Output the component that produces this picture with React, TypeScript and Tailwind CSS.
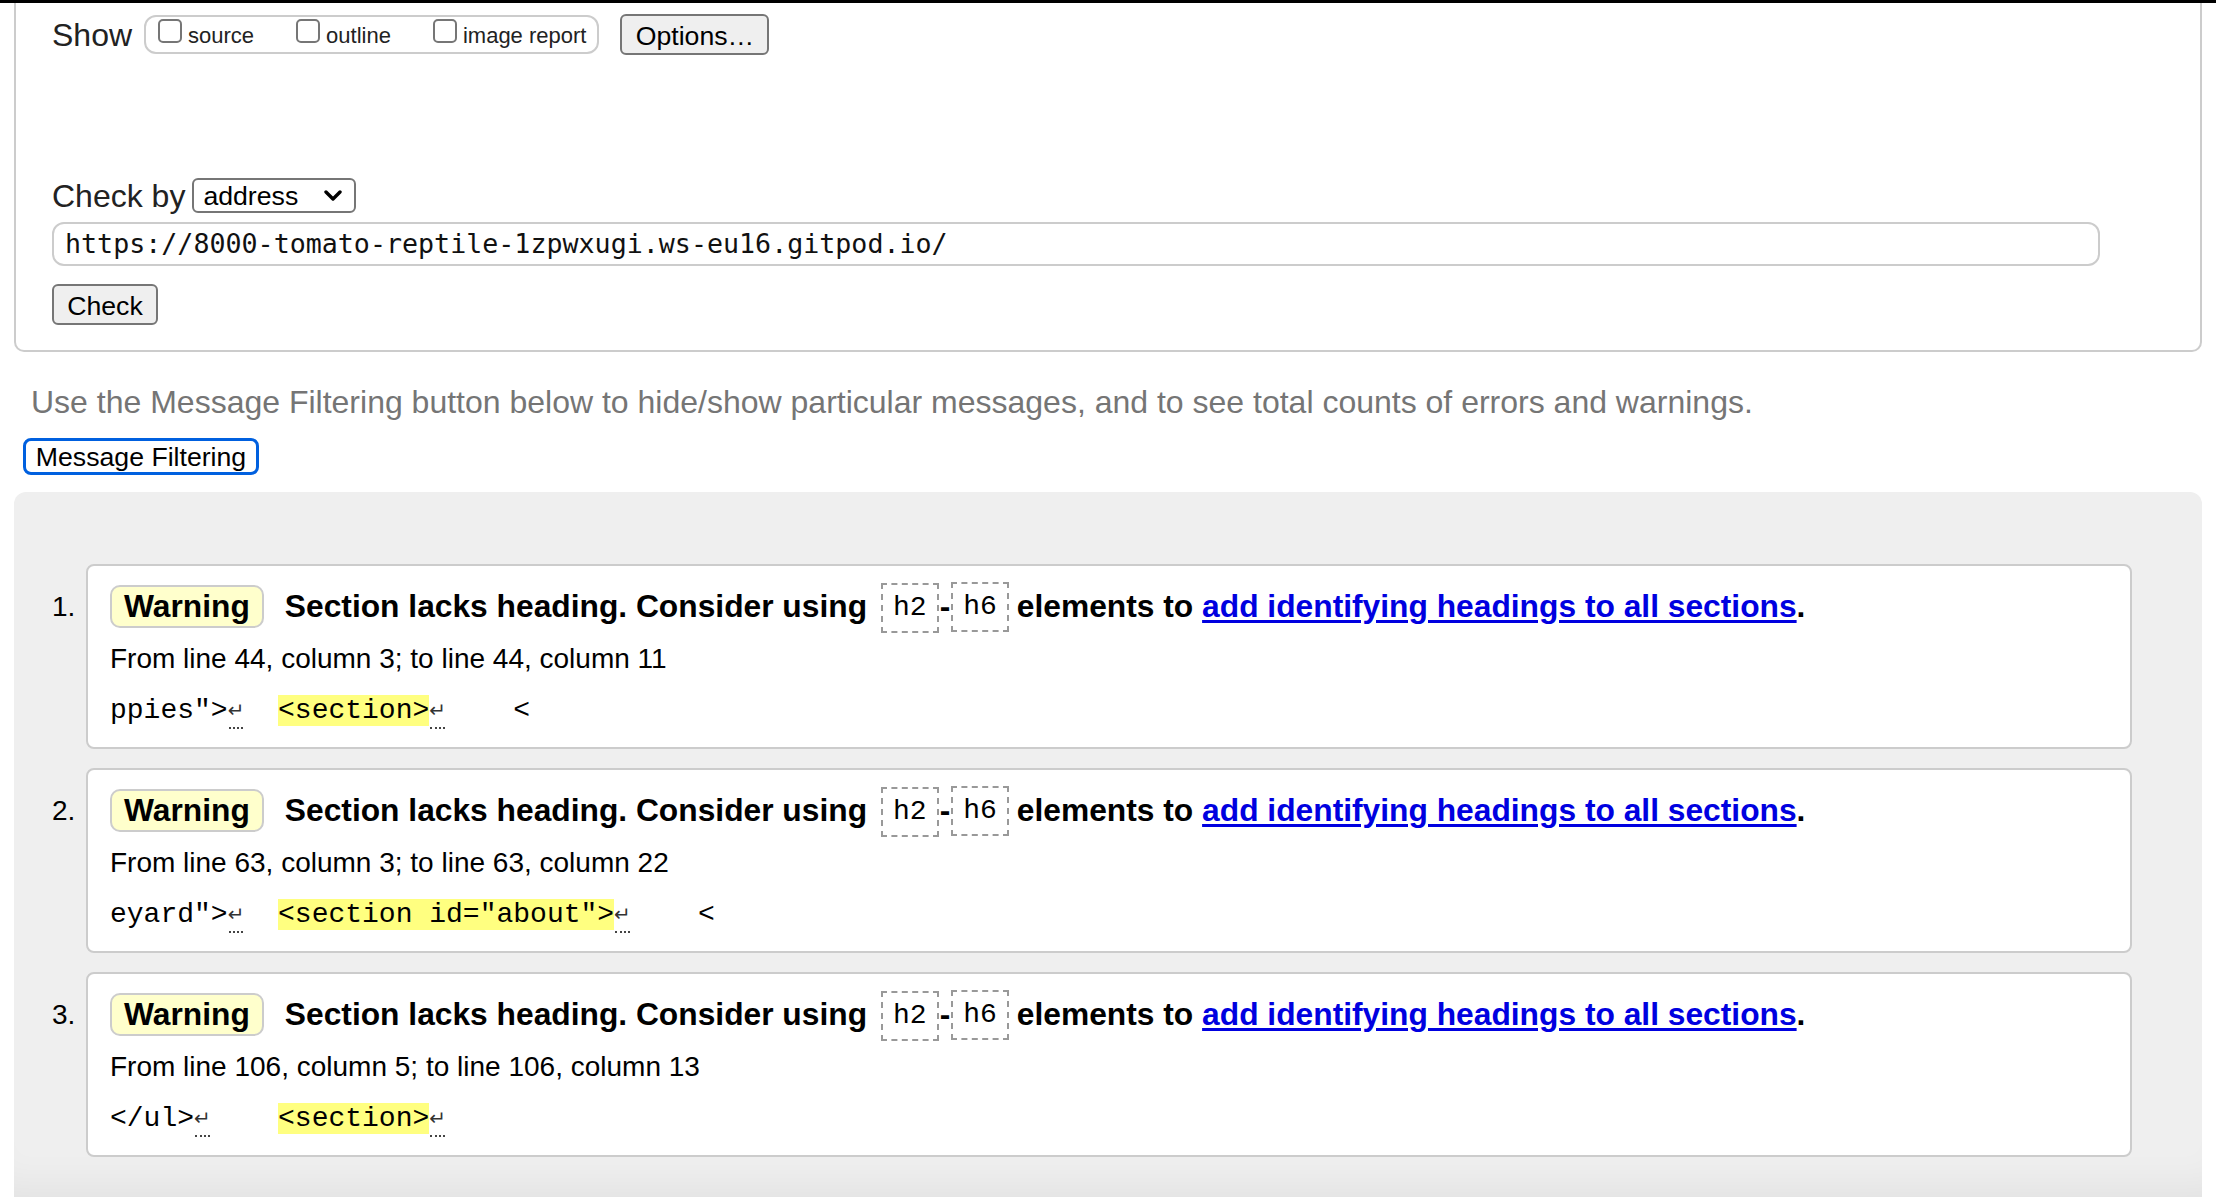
import React from 'react';

const mono = "font-['Liberation_Mono','Courier_New',monospace]";

function Checkbox({ label, last }: { label: string; last?: boolean }) {
  return (
    <label className={`flex items-center ${last ? '' : 'mr-[42px]'}`}>
      <span className="self-start mt-[2px] w-[24px] h-[24px] border-2 border-[#767676] rounded-[5px] bg-white" />
      <span className="ml-[6px] mt-[2px] text-[22px] text-[#222]">{label}</span>
    </label>
  );
}

function Ret() {
  return (
    <span className="inline-block w-[16.8px] h-[33px] align-top relative">
      <span className="absolute left-0 right-0 top-0 text-center font-['DejaVu_Sans',sans-serif] text-[20px] leading-[33px] text-[#333]">↵</span>
      <span className="absolute left-[1px] right-[1px] bottom-[-2px] border-b-2 border-dotted border-[#444]" />
    </span>
  );
}

function Code({ children }: { children: React.ReactNode }) {
  return (
    <span className={`${mono} font-normal text-[28px] h-[50px] leading-[46px] px-[10px] border-2 border-dashed border-[#999] inline-block`}>
      {children}
    </span>
  );
}

type Msg = { n: number; from: string; before: string; hl: string; gap: string; after: string };

const messages: Msg[] = [
  { n: 1, from: 'From line 44, column 3; to line 44, column 11', before: 'ppies">', hl: '<section>', gap: '  ', after: '    <' },
  { n: 2, from: 'From line 63, column 3; to line 63, column 22', before: 'eyard">', hl: '<section id="about">', gap: '  ', after: '    <' },
  { n: 3, from: 'From line 106, column 5; to line 106, column 13', before: '</ul>', hl: '<section>', gap: '    ', after: '' },
];

function Card({ m }: { m: Msg }) {
  return (
    <li className="flex">
      <div className="w-[34px] shrink-0 h-[43px] mt-[21px] flex items-center text-[28px]">{m.n}.</div>
      <div className="flex-1 border-2 border-[#ccc] rounded-[8px] bg-white pt-[19px] pl-[22px] pb-[20px]">
        <div className="h-[43px] flex items-center font-bold text-[31.75px] whitespace-nowrap">
          <span className="h-[43px] leading-[39px] px-[12px] border-2 border-[#ccc] rounded-[10px] bg-[#ffffcc]">Warning</span>
          <span className="ml-[21px]">Section lacks heading. Consider using</span>
          <span className="ml-[14px]"><Code>h2</Code></span>
          <span className="mx-[1px]">-</span>
          <Code>h6</Code>
          <span className="ml-[8px] whitespace-pre">
            elements to <a href="#" className="text-[#0000e0] underline underline-offset-[3px]">add identifying headings to all sections</a>.
          </span>
        </div>
        <div className="mt-[15px] text-[28px] leading-[32px]">{m.from}</div>
        <div className={`mt-[19px] h-[33px] leading-[33px] text-[28px] whitespace-pre ${mono}`}>
          {m.before}<Ret />{m.gap}<span className="bg-[#ffff80]">{m.hl}</span><Ret />{m.after}
        </div>
      </div>
    </li>
  );
}

export default function App() {
  return (
    <div className="w-[2216px] h-[1198px] overflow-hidden bg-white text-black font-['Liberation_Sans',Arial,sans-serif]">
      <div className="h-[3px] bg-black" />
      <div className="mx-[14px] border-x-2 border-b-2 border-[#ccc] rounded-b-[10px] pl-[36px] pt-[11px] pb-[25px]">
        <div className="flex items-center h-[41px]">
          <span className="text-[32px] text-[#222] mr-[12px]">Show</span>
          <div className="flex items-center h-[39px] border-2 border-[#ccc] rounded-[12px] pl-[12px] pr-[11px]">
            <Checkbox label="source" />
            <Checkbox label="outline" />
            <Checkbox label="image report" last />
          </div>
          <button className="ml-[21px] w-[149px] h-[41px] bg-[#efefef] border-2 border-[#767676] rounded-[6px] text-[26.67px] text-black">
            Options…
          </button>
        </div>
        <div className="mt-[123px] flex items-center h-[35px]">
          <span className="text-[32px] text-[#222]">Check by</span>
          <div className="ml-[7px] w-[164px] h-[35px] border-2 border-[#767676] rounded-[6px] bg-white flex items-center pl-[9px] pr-[12px] justify-between">
            <span className="text-[26.67px]">address</span>
            <svg width="18" height="12" viewBox="0 0 18 12" fill="none">
              <polyline points="2,2 9,9 16,2" stroke="#000" strokeWidth="3.4" strokeLinecap="round" strokeLinejoin="round" />
            </svg>
          </div>
        </div>
        <div className="mt-[9px] w-[2048px] h-[44px] border-2 border-[#ccc] rounded-[12px] pl-[11px] flex items-center font-['DejaVu_Sans_Mono',monospace] text-[26.67px] text-[#111]">
          https://8000-tomato-reptile-1zpwxugi.ws-eu16.gitpod.io/
        </div>
        <button className="mt-[18px] block w-[106px] h-[41px] bg-[#efefef] border-2 border-[#767676] rounded-[6px] text-[26.67px] text-black">
          Check
        </button>
      </div>
      <p className="mt-[32px] ml-[31px] text-[32px] leading-[37px] text-[#757575]">
        Use the Message Filtering button below to hide/show particular messages, and to see total counts of errors and warnings.
      </p>
      <button className="mt-[17px] ml-[23px] block w-[236px] h-[37px] border-[3px] border-[#0060df] rounded-[8px] bg-white text-[26.67px] leading-[30px] text-black">
        Message Filtering
      </button>
      <div className="mt-[17px] mx-[14px] h-[705px] rounded-t-[12px] bg-[#efefef] pt-[72px] pl-[38px] pr-[70px] shadow-[inset_0_-40px_40px_-30px_rgba(0,0,0,0.06)]">
        <ol className="flex flex-col gap-[19px]">
          {messages.map(m => <Card key={m.n} m={m} />)}
        </ol>
      </div>
    </div>
  );
}
